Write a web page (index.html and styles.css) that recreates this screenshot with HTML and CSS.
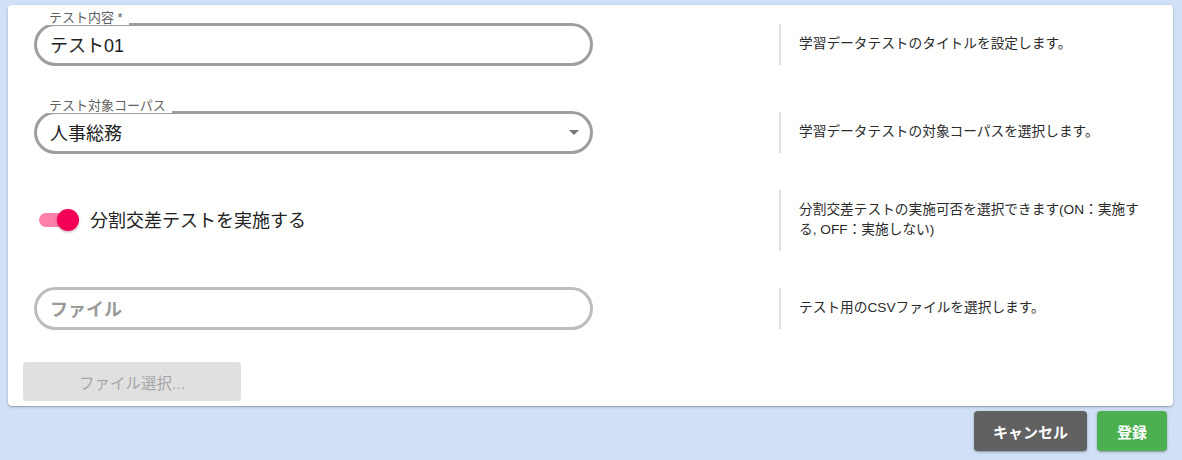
FILE: index.html
```html
<!DOCTYPE html>
<html lang="ja">
<head>
    <meta charset="UTF-8">
    <meta name="viewport" content="width=device-width, initial-scale=1.0">
    <title>学習データテスト登録</title>
    <link rel="stylesheet" href="styles.css">
</head>
<body>
    <div class="card">
        <div class="form-rows">
            <div class="form-row">
                <div class="form-cell">
                    <div class="field">
                        <span class="field-label">テスト内容 *</span>
                        <span class="field-value">テスト01</span>
                    </div>
                </div>
                <div class="help">学習データテストのタイトルを設定します。</div>
            </div>

            <div class="form-row">
                <div class="form-cell">
                    <div class="field">
                        <span class="field-label">テスト対象コーパス</span>
                        <span class="field-value">人事総務</span>
                        <span class="select-arrow"></span>
                    </div>
                </div>
                <div class="help">学習データテストの対象コーパスを選択します。</div>
            </div>

            <div class="form-row">
                <div class="form-cell">
                    <label class="switch-line">
                        <span class="switch">
                            <span class="switch-track"></span>
                            <span class="switch-thumb"></span>
                        </span>
                        <span class="switch-text">分割交差テストを実施する</span>
                    </label>
                </div>
                <div class="help">分割交差テストの実施可否を選択できます(ON：実施する, OFF：実施しない)</div>
            </div>

            <div class="form-row">
                <div class="form-cell">
                    <div class="field field-empty">
                        <span class="field-placeholder">ファイル</span>
                    </div>
                </div>
                <div class="help">テスト用のCSVファイルを選択します。</div>
            </div>
        </div>

        <button class="file-button" disabled>ファイル選択...</button>
    </div>

    <div class="actions">
        <button class="btn btn-cancel">キャンセル</button>
        <button class="btn btn-submit">登録</button>
    </div>
</body>
</html>
```

FILE: styles.css
```css
html, body {
    margin: 0;
    height: 460px;
    overflow: hidden;
}
body {
    font-family: "Liberation Sans", "Noto Sans CJK JP", sans-serif;
    background: #d1e0f6;
    color: #212121;
}
.card {
    margin: 5px 9px 0 8px;
    padding: 8px 0 5px 15px;
    background: #fff;
    border-radius: 4px;
    box-shadow: 0 1px 3px rgba(0, 0, 0, 0.2), 0 1px 1px rgba(0, 0, 0, 0.14);
}
.form-rows {
    display: flex;
    flex-direction: column;
    gap: 26px;
}
.form-row {
    display: flex;
    align-items: center;
    height: 62px;
}
.form-cell {
    width: 756px;
    flex-shrink: 0;
}
.field {
    position: relative;
    box-sizing: border-box;
    display: flex;
    align-items: center;
    width: 559px;
    height: 43px;
    margin-left: 11px;
    padding: 0 13px;
    border: 3px solid #9e9e9e;
    border-radius: 22px;
    font-size: 18px;
}
.field-empty {
    border-color: #bdbdbd;
}
.field-label {
    position: absolute;
    top: -16px;
    left: 8px;
    padding: 0 6px 0 4px;
    background: #fff;
    font-size: 13px;
    line-height: 15px;
    color: #626262;
}
.field-value {
    color: #212121;
}
.field-placeholder {
    color: #9a9a9a;
    font-weight: bold;
}
.select-arrow {
    margin-left: auto;
    margin-right: -2px;
    border-left: 5px solid transparent;
    border-right: 5px solid transparent;
    border-top: 5px solid #757575;
}
.switch-line {
    display: flex;
    align-items: center;
    margin-left: 16px;
}
.switch {
    position: relative;
    width: 40px;
    height: 22px;
}
.switch-track {
    position: absolute;
    left: 0;
    top: 4px;
    width: 34px;
    height: 14px;
    border-radius: 7px;
    background: #fb80ab;
}
.switch-thumb {
    position: absolute;
    left: 18px;
    top: 0;
    width: 22px;
    height: 22px;
    border-radius: 50%;
    background: #f50057;
    box-shadow: 0 1px 3px rgba(0, 0, 0, 0.3);
}
.switch-text {
    margin-left: 11px;
    margin-top: -3px;
    font-size: 18px;
}
.help {
    box-sizing: border-box;
    max-width: 362px;
    padding: 10px 0 11px 18px;
    border-left: 2px solid #e0e0e0;
    font-size: 13.7px;
    line-height: 20px;
    color: #2b2b2b;
}
.file-button {
    display: block;
    width: 218px;
    height: 39px;
    margin: 23px 0 0 0;
    border: none;
    border-radius: 4px;
    background: #e0e0e0;
    color: #a6a6a6;
    font-family: inherit;
    font-size: 15.5px;
}
.actions {
    display: flex;
    justify-content: flex-end;
    gap: 10px;
    padding: 5px 15px 0 0;
}
.btn {
    height: 40px;
    min-width: 70px;
    padding: 0 19px;
    border: none;
    border-radius: 4px;
    color: #fff;
    font-family: inherit;
    font-size: 15px;
    font-weight: bold;
    box-shadow: 0 1px 3px rgba(0, 0, 0, 0.25), 0 1px 1px rgba(0, 0, 0, 0.14);
}
.btn-cancel {
    background: #616161;
}
.btn-submit {
    background: #4caf50;
}
```
